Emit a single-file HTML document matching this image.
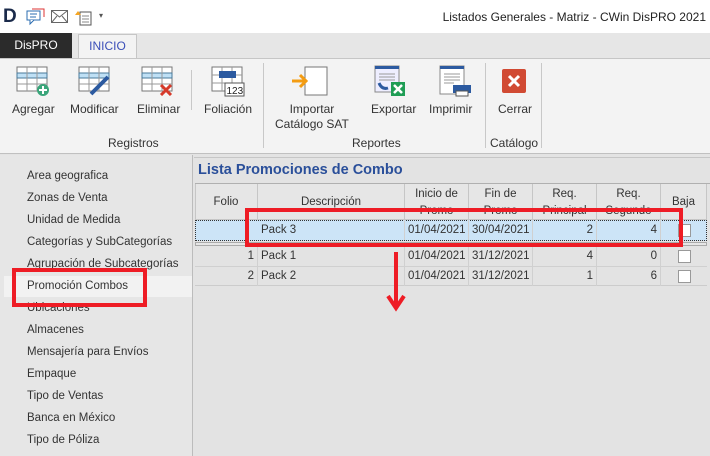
<!DOCTYPE html>
<html><head><meta charset="utf-8"><style>
*{margin:0;padding:0;box-sizing:border-box}
body{width:710px;height:456px;overflow:hidden;position:relative;background:#e3e3e3;font-family:"Liberation Sans","DejaVu Sans",sans-serif;font-size:12px;color:#333}
.a{position:absolute}
.lbl{position:absolute;font-size:12px;color:#333;text-align:center;white-space:nowrap}
.sep{position:absolute;width:1px;background:#c8c8c8}
.li{position:absolute;left:27px;font-size:11.5px;color:#333;white-space:nowrap}
.h{position:absolute;top:184px;height:36px;border-right:1px solid #c6c6c6;font-size:11.5px;text-align:center;line-height:17px;overflow:hidden;color:#333;padding-top:2px}
.c{position:absolute;height:20px;line-height:20px;font-size:11.5px;border-right:1px solid #d0d0d0;padding:0 3px;white-space:nowrap;overflow:hidden}
.chk{position:absolute;width:13px;height:13px;background:#fff;border:1px solid #999}
</style></head><body>
<div class="a" style="left:0;top:0;width:710px;height:33px;background:#fff"></div>
<div class="a" style="left:3px;top:6px;font-weight:bold;font-size:19px;color:#1a2a4a">D</div>
<svg class="a" style="left:26px;top:8px" width="20" height="18"><rect x="1" y="3" width="13" height="9" fill="#fff" stroke="#2b6cb0"/><path d="M4 12 L4 16 L8 12" fill="#fff" stroke="#2b6cb0"/><path d="M6 1 H18 V9" fill="none" stroke="#d33"/><path d="M4 6H11M4 9H10" stroke="#2b6cb0"/></svg>
<svg class="a" style="left:51px;top:10px" width="17" height="13"><rect x="0.5" y="0.5" width="16" height="12" fill="#fff" stroke="#666"/><path d="M1 1 L8.5 7 L16 1 M1 12 L6 6 M16 12 L11 6" fill="none" stroke="#666"/></svg>
<svg class="a" style="left:74px;top:8px" width="20" height="18"><rect x="6" y="4" width="11" height="13" fill="#fff" stroke="#555"/><path d="M1 7 L4 3 L7 7" fill="#f5a623"/><path d="M8 8H15M8 11H15M8 14H15" stroke="#888"/></svg>
<div class="a" style="left:99px;top:11px;font-size:8px;color:#555">▾</div>
<div class="a" style="right:4px;top:10px;font-size:12px;color:#222;white-space:nowrap">Listados Generales - Matriz - CWin DisPRO 2021</div>
<div class="a" style="left:0;top:33px;width:710px;height:25px;background:#e6e6e6"></div>
<div class="a" style="left:0;top:33px;width:72px;height:25px;background:#2b2b2b;color:#fff;font-size:12px;text-align:center;line-height:25px">DisPRO</div>
<div class="a" style="left:78px;top:34px;width:59px;height:25px;background:#f3f3f3;border:1px solid #c6c6c6;border-bottom:none;color:#3b4fb8;font-size:12px;text-align:center;line-height:23px">INICIO</div>
<div class="a" style="left:0;top:58px;width:710px;height:96px;background:#f3f3f3;border-top:1px solid #c6c6c6;border-bottom:1px solid #c0c0c0"></div>
<svg class="a" style="left:16px;top:66px" width="34" height="30"><rect x="1" y="1" width="30" height="24" fill="#fff" stroke="#777"/><rect x="1" y="7" width="30" height="5" fill="#bfe0f5" stroke="#4a7a9a"/><path d="M11 1V25M21 1V25M1 18H31" stroke="#999"/><circle cx="27" cy="24" r="6" fill="#3aa57a"/><path d="M27 20V28M23 24H31" stroke="#fff" stroke-width="2"/></svg>
<svg class="a" style="left:78px;top:66px" width="34" height="32"><rect x="1" y="1" width="30" height="24" fill="#fff" stroke="#777"/><rect x="1" y="7" width="30" height="5" fill="#bfe0f5" stroke="#4a7a9a"/><path d="M11 1V25M21 1V25M1 18H31" stroke="#999"/><path d="M13 28 L30 11" stroke="#2c5aa0" stroke-width="4"/></svg>
<svg class="a" style="left:141px;top:66px" width="34" height="30"><rect x="1" y="1" width="30" height="24" fill="#fff" stroke="#777"/><rect x="1" y="7" width="30" height="5" fill="#bfe0f5" stroke="#4a7a9a"/><path d="M11 1V25M21 1V25M1 18H31" stroke="#999"/><path d="M20 19L30 29M30 19L20 29" stroke="#d63a2a" stroke-width="3"/></svg>
<svg class="a" style="left:211px;top:66px" width="34" height="32"><rect x="1" y="1" width="30" height="24" fill="#fff" stroke="#777"/><path d="M11 1V25M21 1V25M1 9H31M1 17H31" stroke="#999"/><rect x="8" y="5" width="17" height="7" fill="#2c5aa0"/><rect x="14" y="17" width="19" height="13" fill="#fff" stroke="#555"/><text x="15.5" y="28" font-size="10" font-family="Liberation Sans" fill="#222">123</text></svg>
<svg class="a" style="left:290px;top:66px" width="40" height="30"><rect x="15" y="1" width="22" height="28" fill="#fff" stroke="#777"/><path d="M2 15H16M10 9L16 15L10 21" fill="none" stroke="#f39c12" stroke-width="3"/></svg>
<svg class="a" style="left:374px;top:65px" width="34" height="32"><rect x="1" y="1" width="24" height="26" fill="#eef" stroke="#888"/><rect x="1" y="1" width="24" height="3" fill="#2c5aa0"/><path d="M5 9H21M5 12H21M5 15H21" stroke="#999"/><path d="M5 18 Q8 25 14 23" fill="none" stroke="#2c5aa0" stroke-width="3"/><rect x="17" y="17" width="14" height="14" fill="#1f9d55"/><path d="M20 20L28 28M28 20L20 28" stroke="#fff" stroke-width="2.5"/></svg>
<svg class="a" style="left:439px;top:65px" width="34" height="32"><rect x="1" y="1" width="24" height="28" fill="#fff" stroke="#888"/><rect x="1" y="1" width="24" height="3" fill="#2c5aa0"/><path d="M5 9H21M5 12H21M5 15H21M5 18H15" stroke="#999"/><rect x="14" y="20" width="18" height="8" fill="#2c5aa0"/><rect x="17" y="26" width="12" height="5" fill="#fff" stroke="#555"/></svg>
<svg class="a" style="left:502px;top:69px" width="24" height="24"><rect x="0" y="0" width="24" height="24" rx="2" fill="#d14a33"/><path d="M7 7L17 17M17 7L7 17" stroke="#fff" stroke-width="3"/></svg>
<div class="lbl" style="left:12px;top:102px">Agregar</div>
<div class="lbl" style="left:70px;top:102px">Modificar</div>
<div class="lbl" style="left:137px;top:102px">Eliminar</div>
<div class="lbl" style="left:204px;top:102px">Foliación</div>
<div class="lbl" style="left:275px;top:102px;line-height:15px">Importar<br>Catálogo SAT</div>
<div class="lbl" style="left:371px;top:102px">Exportar</div>
<div class="lbl" style="left:429px;top:102px">Imprimir</div>
<div class="lbl" style="left:498px;top:102px">Cerrar</div>
<div class="lbl" style="left:108px;top:136px">Registros</div>
<div class="lbl" style="left:352px;top:136px">Reportes</div>
<div class="lbl" style="left:490px;top:136px">Catálogo</div>
<div class="sep" style="left:191px;top:70px;height:40px"></div>
<div class="sep" style="left:263px;top:63px;height:85px"></div>
<div class="sep" style="left:485px;top:63px;height:85px"></div>
<div class="sep" style="left:541px;top:63px;height:85px"></div>
<div class="a" style="left:0;top:155px;width:193px;height:301px;background:#e6e6e6;border-right:1px solid #bcbcbc"></div>
<div class="a" style="left:4px;top:276px;width:188px;height:21px;background:#f2f2f2"></div>
<div class="li" style="top:170px">Area geografica</div>
<div class="li" style="top:192px">Zonas de Venta</div>
<div class="li" style="top:214px">Unidad de Medida</div>
<div class="li" style="top:236px">Categorías y SubCategorías</div>
<div class="li" style="top:258px">Agrupación de Subcategorías</div>
<div class="li" style="top:280px">Promoción Combos</div>
<div class="li" style="top:302px">Ubicaciones</div>
<div class="li" style="top:324px">Almacenes</div>
<div class="li" style="top:346px">Mensajería para Envíos</div>
<div class="li" style="top:368px">Empaque</div>
<div class="li" style="top:390px">Tipo de Ventas</div>
<div class="li" style="top:412px">Banca en México</div>
<div class="li" style="top:434px">Tipo de Póliza</div>
<div class="a" style="left:194px;top:157px;width:516px;height:1px;background:#c6c6c6"></div>
<div class="a" style="left:198px;top:162px;font-size:14.5px;font-weight:bold;color:#2a4f9a">Lista Promociones de Combo</div>
<div class="a" style="left:195px;top:183px;width:515px;height:1px;background:#b0b0b0"></div>
<div class="a" style="left:195px;top:184px;width:512px;height:36px;background:#e6e6e6;border-bottom:1px solid #c6c6c6;border-left:1px solid #c6c6c6"></div>
<div class="h" style="left:195px;width:63px;padding-top:10px">Folio</div>
<div class="h" style="left:258px;width:147px;padding-top:10px">Descripción</div>
<div class="h" style="left:405px;width:64px">Inicio de<br>Promo</div>
<div class="h" style="left:469px;width:64px">Fin de<br>Promo</div>
<div class="h" style="left:533px;width:64px">Req.<br>Principal</div>
<div class="h" style="left:597px;width:64px">Req.<br>Segundo</div>
<div class="h" style="left:661px;width:46px;padding-top:10px">Baja</div>
<div class="a" style="left:195px;top:220px;width:512px;height:21px;background:#cce4f7;border:1px dotted #333"></div>
<div class="a" style="left:195px;top:242px;width:512px;height:4px;border:1px solid #aaa;background:#e6e6e6"></div>
<div class="c" style="left:258px;top:220px;width:147px">Pack 3</div>
<div class="c" style="left:405px;top:220px;width:64px">01/04/2021</div>
<div class="c" style="left:469px;top:220px;width:64px">30/04/2021</div>
<div class="c" style="left:533px;top:220px;width:64px;text-align:right">2</div>
<div class="c" style="left:597px;top:220px;width:64px;text-align:right">4</div>
<div class="chk" style="left:678px;top:224px"></div>
<div class="a" style="left:195px;top:246px;width:512px;height:40px;border-bottom:1px solid #ccc"></div>
<div class="a" style="left:195px;top:266px;width:512px;height:1px;background:#d0d0d0"></div>
<div class="c" style="left:195px;top:246px;width:63px;text-align:right">1</div>
<div class="c" style="left:258px;top:246px;width:147px">Pack 1</div>
<div class="c" style="left:405px;top:246px;width:64px">01/04/2021</div>
<div class="c" style="left:469px;top:246px;width:64px">31/12/2021</div>
<div class="c" style="left:533px;top:246px;width:64px;text-align:right">4</div>
<div class="c" style="left:597px;top:246px;width:64px;text-align:right">0</div>
<div class="chk" style="left:678px;top:250px"></div>
<div class="c" style="left:195px;top:266px;width:63px;text-align:right">2</div>
<div class="c" style="left:258px;top:266px;width:147px">Pack 2</div>
<div class="c" style="left:405px;top:266px;width:64px">01/04/2021</div>
<div class="c" style="left:469px;top:266px;width:64px">31/12/2021</div>
<div class="c" style="left:533px;top:266px;width:64px;text-align:right">1</div>
<div class="c" style="left:597px;top:266px;width:64px;text-align:right">6</div>
<div class="chk" style="left:678px;top:270px"></div>
<div class="a" style="left:245px;top:208px;width:438px;height:39px;border:4px solid #ee1c25"></div>
<div class="a" style="left:12px;top:268px;width:135px;height:39px;border:4px solid #ee1c25"></div>
<svg class="a" style="left:384px;top:250px" width="24" height="64"><path d="M12 2V56" stroke="#ee1c25" stroke-width="4"/><path d="M4 46L12 58L20 46" fill="none" stroke="#ee1c25" stroke-width="4"/></svg>
</body></html>
